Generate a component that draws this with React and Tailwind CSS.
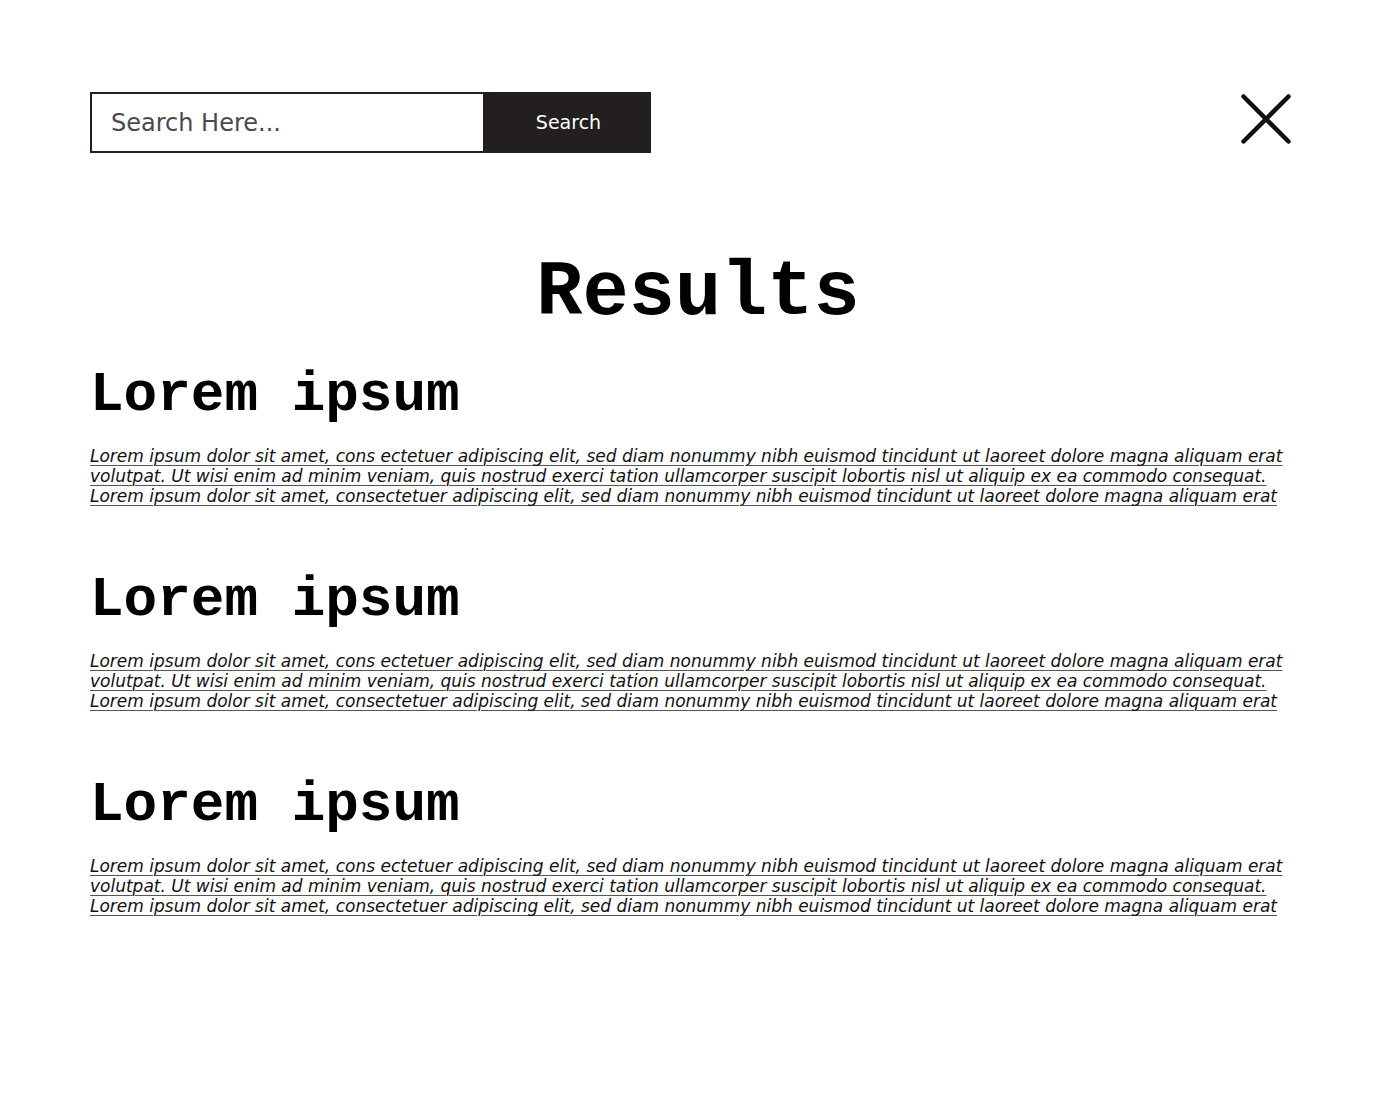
import React from "react";

const para = [
  "Lorem ipsum dolor sit amet, cons ectetuer adipiscing elit, sed diam nonummy nibh euismod tincidunt ut laoreet dolore magna aliquam erat",
  "volutpat. Ut wisi enim ad minim veniam, quis nostrud exerci tation ullamcorper suscipit lobortis nisl ut aliquip ex ea commodo consequat.",
  "Lorem ipsum dolor sit amet, consectetuer adipiscing elit, sed diam nonummy nibh euismod tincidunt ut laoreet dolore magna aliquam erat",
];

function Section({ first }) {
  return (
    <section className={first ? "mt-[35px]" : "mt-[66px]"}>
      <h2 className="font-['Liberation_Mono',monospace] font-bold text-[56px] leading-none text-black">
        Lorem ipsum
      </h2>
      <div className="mt-[23px] font-['DejaVu_Sans',sans-serif] italic text-[17px] leading-[20px] text-[#111]">
        {para.map((l, i) => (
          <div key={i} className="whitespace-nowrap">
            <span className="underline underline-offset-[3px] decoration-[1px] decoration-[#555]">{l}</span>
          </div>
        ))}
      </div>
    </section>
  );
}

export default function App() {
  return (
    <div className="w-[1400px] h-[1120px] bg-white">
      <div className="flex items-start justify-between pl-[90px] pr-[109px] pt-[92px]">
        <div className="flex h-[61px] w-[561px] border-2 border-[#231f20]">
          <div className="flex-1 flex items-center pl-[19px] bg-white font-['DejaVu_Sans',sans-serif] text-[24px] text-[#4a4a4a]">
            Search Here...
          </div>
          <div className="w-[166px] pl-[5px] bg-[#231f20] flex items-center justify-center font-['DejaVu_Sans',sans-serif] text-[19px] text-white">
            Search
          </div>
        </div>
        <svg width="50" height="50" viewBox="0 0 50 50" className="mt-[2px]">
          <path d="M2.5 2.5 L47.5 47.5 M47.5 2.5 L2.5 47.5" stroke="#111" strokeWidth="4.5" strokeLinecap="round" fill="none" />
        </svg>
      </div>
      <div className="pl-[90px] pr-[94px]">
        <h1 className="mt-[102px] text-center font-['Liberation_Mono',monospace] font-bold text-[77px] leading-none text-black">
          Results
        </h1>
        <div className="pr-[16px]">
          <Section first />
          <Section />
          <Section />
        </div>
      </div>
    </div>
  );
}
